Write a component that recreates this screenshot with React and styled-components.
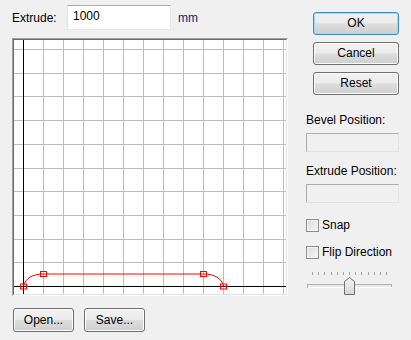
import React from "react";
import styled, { createGlobalStyle } from "styled-components";

const GlobalStyle = createGlobalStyle`
  html, body {
    margin: 0;
    padding: 0;
    background: #f0f0f0;
  }
  body {
    font-family: "Liberation Sans", Arial, sans-serif;
    font-size: 12px;
    color: #000;
  }
`;

const INNER_W = 272;
const INNER_H = 254;
const hLines = Array.from({ length: 11 }, (_, i) => Math.round(9 + 23.7 * i) + 0.5);
const vLines = Array.from({ length: 13 }, (_, i) => 29 + 20 * i + 0.5);
const points = [
  [9.5, 246.5],
  [29.5, 234],
  [189.5, 234],
  [209.5, 246.5],
];

const ProfileGrid = () => (
  <svg width={INNER_W} height={INNER_H} style={{ display: "block" }}>
    <rect width={INNER_W} height={INNER_H} fill="#fff" />
    {vLines.map((x) => (
      <line key={"v" + x} x1={x} y1={0} x2={x} y2={INNER_H} stroke="#bdbdbd" strokeWidth="1" />
    ))}
    {hLines.slice(0, 10).map((y) => (
      <line key={"h" + y} x1={0} y1={y} x2={INNER_W} y2={y} stroke="#bdbdbd" strokeWidth="1" />
    ))}
    <line x1={9.5} y1={0} x2={9.5} y2={INNER_H} stroke="#000" strokeWidth="1" />
    <line x1={0} y1={246.5} x2={INNER_W} y2={246.5} stroke="#000" strokeWidth="1" />
    <path
      d="M9.5 246.5 C11 238 19 234 29.5 234 L189.5 234 C200 234 208 238 209.5 246.5"
      fill="none"
      stroke="#ff0000"
      strokeWidth="1"
    />
    {points.map(([x, y]) => (
      <rect
        key={x}
        x={x - 3}
        y={y - 2.5}
        width={6}
        height={5}
        fill="none"
        stroke="#ff0000"
        strokeWidth="1"
      />
    ))}
  </svg>
);

const SliderDrawing = () => {
  const ticks = Array.from({ length: 13 }, (_, i) => Math.round(5 + i * 6.17) + 0.5);
  return (
    <svg width={86} height={26} style={{ display: "block" }}>
      {ticks.map((x) => (
        <line key={x} x1={x} y1={2} x2={x} y2={5} stroke="#a0a0a0" strokeWidth="1" />
      ))}
      <rect x={0.5} y={14.5} width={84} height={3} fill="#e7eaea" stroke="#b0b0b0" strokeWidth="1" />
      <line x1={1} y1={17.5} x2={85} y2={17.5} stroke="#fff" strokeWidth="1" />
      <defs>
        <linearGradient id="thumb" x1="0" y1="0" x2="0" y2="1">
          <stop offset="0" stopColor="#f4f4f4" />
          <stop offset="1" stopColor="#d6d6d6" />
        </linearGradient>
      </defs>
      <path
        d="M37.5 11.5 L42.5 7.5 L47.5 11.5 L47.5 24.5 L37.5 24.5 Z"
        fill="url(#thumb)"
        stroke="#707070"
        strokeWidth="1"
        strokeLinejoin="round"
      />
    </svg>
  );
};

const App = () => {
  return (
    <>
      <GlobalStyle />
      <Dialog>
        <LeftColumn>
          <TopRow>
            <Label>Extrude:</Label>
            <TextInput defaultValue="1000" />
            <Unit>mm</Unit>
          </TopRow>
          <CanvasFrame>
            <CanvasInner>
              <ProfileGrid />
            </CanvasInner>
          </CanvasFrame>
          <BottomRow>
            <Button $w={61}>Open...</Button>
            <Button $w={61}>Save...</Button>
          </BottomRow>
        </LeftColumn>
        <RightColumn>
          <ButtonStack>
            <Button $w={86} $h={23} $default>OK</Button>
            <Button $w={86} $h={23}>Cancel</Button>
            <Button $w={86} $h={23}>Reset</Button>
          </ButtonStack>
          <FieldLabel $top={18}>Bevel Position:</FieldLabel>
          <ReadBox />
          <FieldLabel $top={12}>Extrude Position:</FieldLabel>
          <ReadBox />
          <CheckRow $top={15}>
            <CheckBox />
            <span>Snap</span>
          </CheckRow>
          <CheckRow $top={13}>
            <CheckBox />
            <span>Flip Direction</span>
          </CheckRow>
          <SliderWrap>
            <SliderDrawing />
          </SliderWrap>
        </RightColumn>
      </Dialog>
    </>
  );
};

const Dialog = styled.div`
  width: 411px;
  height: 340px;
  display: flex;
  background: #f0f0f0;
  overflow: hidden;
`;

const LeftColumn = styled.div`
  display: flex;
  flex-direction: column;
  margin-left: 12px;
  width: 276px;
`;

const TopRow = styled.div`
  display: flex;
  align-items: center;
  margin-top: 5px;
  height: 25px;
`;

const Label = styled.span`
  width: 55px;
  line-height: 14px;
`;

const TextInput = styled.input`
  box-sizing: border-box;
  width: 104px;
  height: 25px;
  margin: 0;
  padding: 0 0 4px 5px;
  border: 1px solid;
  border-color: #abadb3 #e3e9ef #e3e9ef #e2e3ea;
  background: #fff;
  font-family: "Liberation Sans", Arial, sans-serif;
  font-size: 12px;
  color: #000;
  outline: none;
`;

const Unit = styled.span`
  margin-left: 7px;
  color: #1a1a6e;
`;

const CanvasFrame = styled.div`
  margin-top: 8px;
  width: 276px;
  height: 258px;
  box-sizing: border-box;
  border: 1px solid;
  border-color: #a0a0a0 #ffffff #ffffff #a0a0a0;
`;

const CanvasInner = styled.div`
  border: 1px solid;
  border-color: #696969 #e3e3e3 #e3e3e3 #696969;
`;

const BottomRow = styled.div`
  display: flex;
  gap: 10px;
  margin-top: 12px;
  padding-left: 1px;
`;

const Button = styled.button`
  box-sizing: border-box;
  width: ${(p) => p.$w}px;
  height: ${(p) => p.$h || 24}px;
  margin: 0;
  padding: 0 0 1px;
  border: 1px solid ${(p) => (p.$default ? "#3c8dc4" : "#707070")};
  border-radius: 3px;
  background: linear-gradient(#f2f2f2 0%, #ebebeb 48%, #dddddd 52%, #cfcfcf 100%);
  box-shadow: inset 0 0 0 1px ${(p) => (p.$default ? "#9fdcf8" : "#fcfcfc")};
  font-family: "Liberation Sans", Arial, sans-serif;
  font-size: 12px;
  color: #000;
`;

const RightColumn = styled.div`
  display: flex;
  flex-direction: column;
  margin-left: 18px;
  width: 93px;
  padding-top: 12px;
`;

const ButtonStack = styled.div`
  display: flex;
  flex-direction: column;
  align-items: flex-end;
  gap: 7px;
`;

const FieldLabel = styled.div`
  margin-top: ${(p) => p.$top}px;
  line-height: 14px;
  white-space: nowrap;
`;

const ReadBox = styled.div`
  box-sizing: border-box;
  margin-top: 6px;
  width: 93px;
  height: 19px;
  border: 1px solid;
  border-color: #adadad #e3e3e3 #e3e3e3 #adadad;
  background: #f0f0f0;
`;

const CheckRow = styled.label`
  display: flex;
  align-items: center;
  gap: 3px;
  margin-top: ${(p) => p.$top}px;
  line-height: 14px;
`;

const CheckBox = styled.span`
  box-sizing: border-box;
  width: 13px;
  height: 13px;
  border: 1px solid #8f8f8f;
  background: linear-gradient(135deg, #dcdcdc, #f6f6f6);
  box-shadow: inset 0 0 0 1px #f4f4f4;
`;

const SliderWrap = styled.div`
  margin-top: 11px;
  margin-left: 1px;
`;

export default App;
